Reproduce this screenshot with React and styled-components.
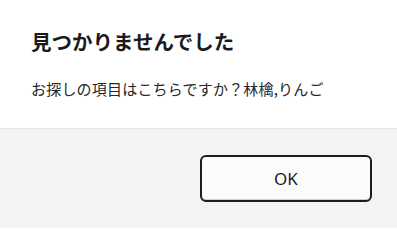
import styled, { createGlobalStyle } from "styled-components";

const Global = createGlobalStyle`
  html, body {
    margin: 0;
    padding: 0;
    background: #ffffff;
  }
  body {
    font-family: "Noto Sans CJK JP", "Noto Sans", sans-serif;
  }
`;

export default function App() {
  return (
    <>
      <Global />
      <Dialog>
        <Content>
          <Title>見つかりませんでした</Title>
          <Message>お探しの項目はこちらですか？林檎,りんご</Message>
        </Content>
        <Footer>
          <Button type="button">OK</Button>
        </Footer>
      </Dialog>
    </>
  );
}

const Dialog = styled.div`
  width: 397px;
  height: 228px;
  display: flex;
  flex-direction: column;
  background: #ffffff;
  overflow: hidden;
`;

const Content = styled.div`
  display: flex;
  flex-direction: column;
  gap: 23px;
  padding: 27px 24px 28px 31px;
  height: 128px;
  box-sizing: border-box;
`;

const Title = styled.h1`
  margin: 0;
  font-family: "Noto Sans CJK JP", sans-serif;
  font-size: 20.5px;
  line-height: 28px;
  font-weight: 700;
  color: #1a1a1a;
`;

const Message = styled.p`
  margin: 0;
  font-family: "Noto Sans CJK JP", sans-serif;
  font-size: 15px;
  line-height: 22px;
  letter-spacing: 0.2px;
  color: #262626;
`;

const Footer = styled.div`
  flex: 1;
  display: flex;
  justify-content: flex-end;
  align-items: flex-start;
  padding: 26px 25px 0 0;
  background: #f3f3f3;
  border-top: 1px solid #e5e5e5;
`;

const Button = styled.button`
  width: 172px;
  height: 47px;
  box-sizing: border-box;
  border: 2px solid #1c1c1c;
  border-radius: 6px;
  background: #fbfbfb;
  box-shadow: inset 0 -1px 0 #cfcfcf;
  font-family: "Noto Sans", "Open Sans", sans-serif;
  font-size: 17px;
  color: #1b1b1b;
  padding: 0;
  cursor: pointer;
`;
